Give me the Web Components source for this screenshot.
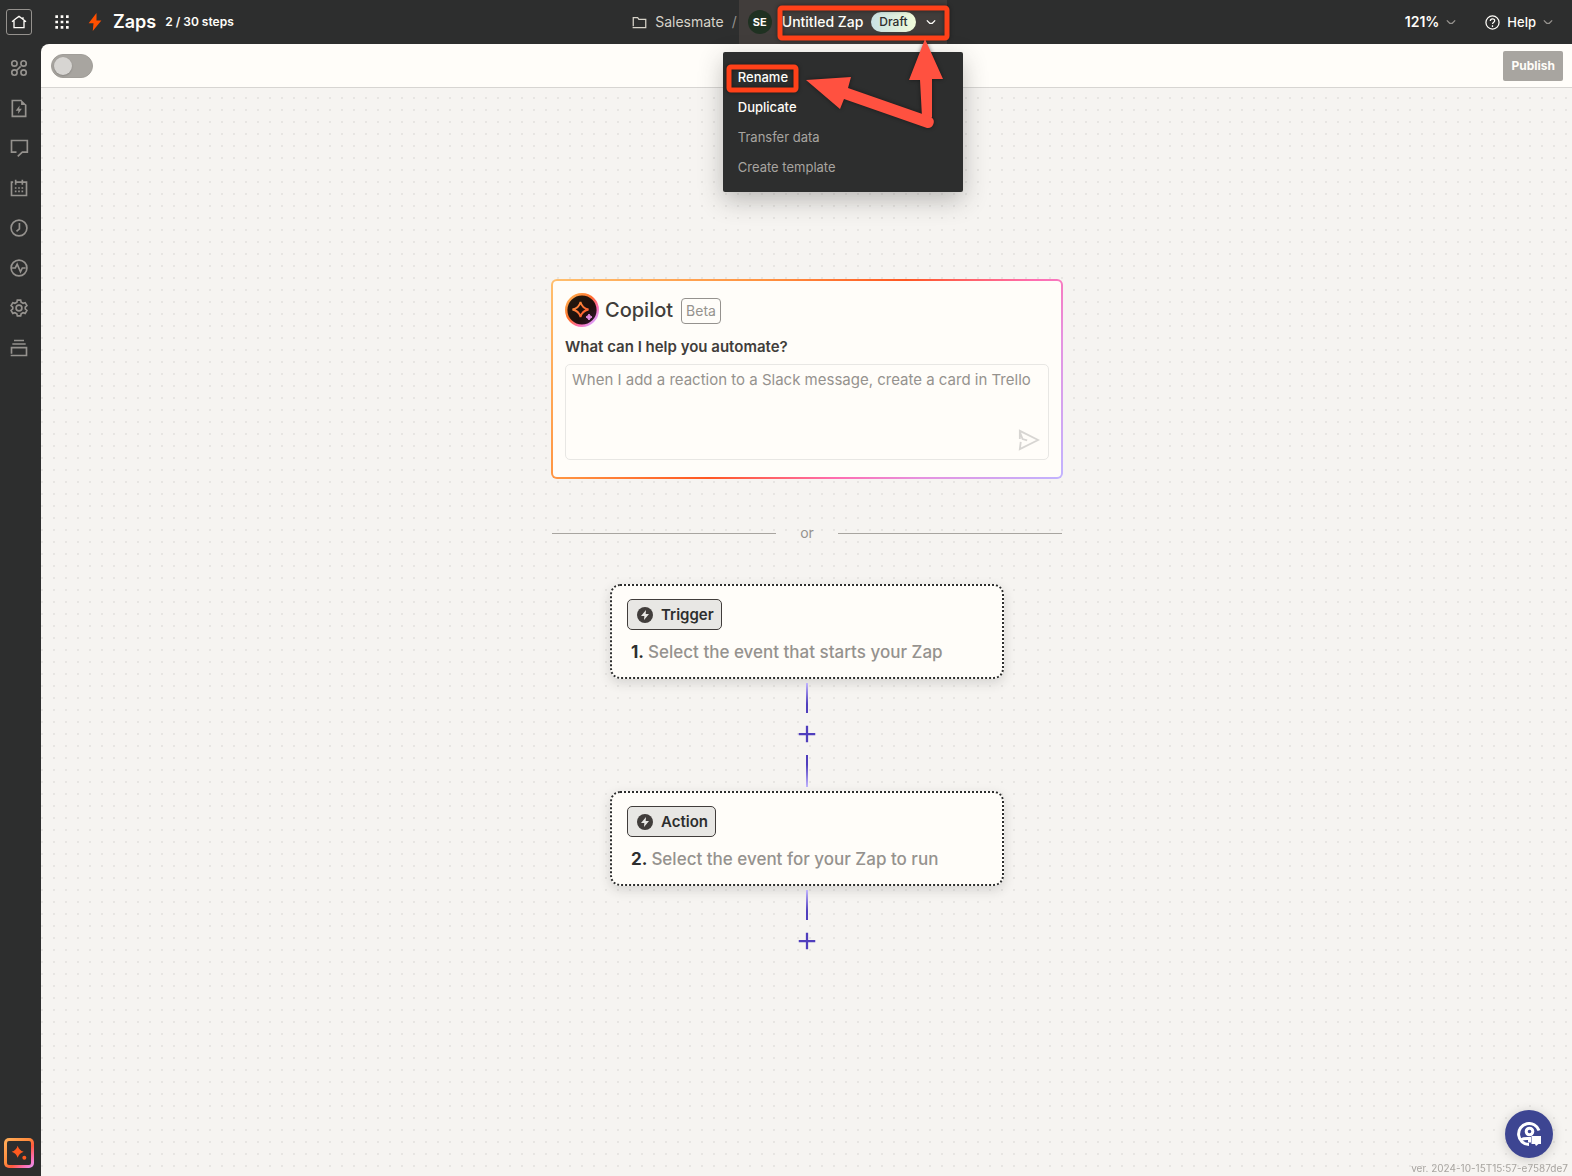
<!DOCTYPE html>
<html lang="en">
<head>
<meta charset="utf-8">
<title>Untitled Zap</title>
<style>
  body {
    margin: 0;
    font-family: Inter, "Liberation Sans", sans-serif;
    font-size: 14px;
    color: #2d2e2e;
    background: #2d2e2e;
  }
</style>
</head>
<body>
<zap-editor></zap-editor>

<script>
/**
 * Icon markup by name, drawn on a 24 x 24 grid.
 */
const icons = {
  home: '<path d="M1.500 11.500 7 7l5-3.500 5 3.500 5.500 4.500M4.500 10v10.500h15V10M18 8V5"/>',
  grid: '<g fill="currentColor" stroke="none"><path d="M2 2h4v4H2zM10 2h4v4h-4zM18 2h4v4h-4zM2 10h4v4H2zM10 10h4v4h-4zM18 10h4v4h-4zM2 18h4v4H2zM10 18h4v4h-4zM18 18h4v4h-4z"/></g>',
  bolt: '<path fill="currentColor" stroke="none" d="M14 0 3.500 13.500h6.500L9 24l11.500-14H14z"/>',
  apps: '<circle cx="6.500" cy="6.500" r="3.200"/><circle cx="17.500" cy="6.500" r="3.200"/><circle cx="6.500" cy="17.500" r="3.200"/><circle cx="17.500" cy="17.500" r="3.200"/><path d="m9 15 5-5"/>',
  file: '<path d="M15 3H4v19h16V8"/><path fill="currentColor" stroke="none" d="M14.500 2 21 8.500h-6.500zM12.800 9 8 15.300h3.300l-.6 4 4.800-6.300h-3.300z"/>',
  comment: '<path d="M9 17H3V3h19v14h-6l-5.500 5"/>',
  calendar: '<path d="M5 5H3v16h18V5H7M8 2v6M16 2v6"/><g fill="currentColor" stroke="none"><path d="M7 11h2v2H7zM11 11h2v2h-2zM15 11h2v2h-2zM7 15h2v2H7zM11 15h2v2h-2zM15 15h2v2h-2z"/></g>',
  clock: '<circle cx="12" cy="12" r="9.500"/><path d="M12.500 6v7L9 16"/>',
  pulse: '<circle cx="12" cy="12" r="9.500"/><path d="M3 12h4.500l2.300-4.500 4 9L16 12h4"/>',
  gear: '<path d="M9.500 5 10 2.500h4l.6 2.600 2.300 1.300 2.500-.8 2.100 3.600-2 1.800v2.200l2 1.800-2.100 3.500-2.600-.8-2.200 1.300-.6 2.500h-4L9.400 19l-2.300-1.300-2.500.8L2.500 15l2-1.800V11l-2-1.800 2.100-3.600 2.500.8z"/><circle cx="12" cy="12" r="3.500"/>',
  stack: '<path d="M6 3h12M4 7.200h16M3 19v-7.500h18V21H2"/>',
  folder: '<path d="M2 18V4h7l2 3h11v13H1"/>',
  chevron: '<path d="m2 8 7 7h6l7-7"/>',
  help: '<circle cx="12" cy="12" r="10.500"/><path d="M8.500 9.500C8.500 5 15.500 5 15.500 9c0 2.500-3.500 2.500-3.500 5.500M12 16.500V19"/>',
  send: '<path d="M2 11 2 2l20 10L2 22l1-8M2 3.500 5 11l5 1.500"/>',
  plus: '<path d="M12 1v22M1 12h22"/>',
  badge: '<circle cx="12" cy="12" r="12" fill="currentColor" stroke="none"/><path fill="#e8e7e4" stroke="none" d="M13.500 4.500 6 13.500h5l-.5 6 7.500-9h-5z"/>',
  sparkle: '<path fill="currentColor" stroke="none" d="M10 1q2 7 9 9-7 2-9 9-2-7-9-9 7-2 9-9z"/><circle cx="20" cy="19" r="3" fill="currentColor" stroke="none"/>',
  support: '<path d="M22 8.500A10.500 10.500 0 1 0 12 22.500"/><circle cx="12.500" cy="9.500" r="3.300"/><path d="M4.500 17.500c1.500-1 4-1.200 8-1v4"/><path fill="currentColor" stroke="none" d="M14.500 14H24v8h-2.500L19 24l-1-2h-3.500z"/>'
}

/**
 * Builds a template element from a markup string.
 *
 * @param {string} markup - The styles and markup of the component.
 * @returns {HTMLTemplateElement} The template.
 */
function createTemplate (markup) {
  const template = document.createElement('template')
  template.innerHTML = markup
  return template
}

/**
 * Base class that clones the static template of a subclass into its shadow root.
 */
class TemplateElement extends HTMLElement {
  constructor () {
    super()
    this.attachShadow({ mode: 'open' })
    this.shadowRoot.appendChild(this.constructor.template.content.cloneNode(true))
  }
}

/**
 * Icon, picked by its name attribute and sized with --size.
 */
class ZapIcon extends TemplateElement {
  static template = createTemplate(`
    <style>
      :host {
        display: inline-flex;
        flex: none;
        width: var(--size, 20px);
        height: var(--size, 20px);
      }
      svg {
        width: 100%;
        height: 100%;
        fill: none;
        stroke: currentColor;
        stroke-width: var(--stroke, 2);
      }
    </style>
    <svg viewBox="0 0 24 24" aria-hidden="true"></svg>
  `)

  connectedCallback () {
    this.shadowRoot.querySelector('svg').innerHTML = icons[this.getAttribute('name')]
  }
}
customElements.define('zap-icon', ZapIcon)

/**
 * Dark column of navigation links at the left.
 */
class ZapSidebar extends TemplateElement {
  static template = createTemplate(`
    <style>
      :host {
        display: flex;
        flex-direction: column;
        justify-content: space-between;
        width: 41px;
        flex: none;
        color: #95928e;
      }
      nav {
        display: flex;
        flex-direction: column;
        padding-top: 4px;
      }
      a {
        display: flex;
        align-items: center;
        justify-content: center;
        width: 38px;
        height: 40px;
        color: inherit;
      }
      button {
        display: flex;
        align-items: center;
        justify-content: center;
        width: 30px;
        height: 30px;
        margin: 0 0 8px 4px;
        padding: 0;
        border: 3px solid transparent;
        border-radius: 5px;
        color: #ff5a1f;
        background:
          linear-gradient(#2d2e2e, #2d2e2e) padding-box,
          linear-gradient(135deg, #ffb05c, #ff8a3c 45%, #ff5a3c 60%, #ff6db0 80%, #e59bff) border-box;
        --size: 16px;
      }
    </style>
    <nav aria-label="Editor">
      <a href="#apps" aria-label="Apps"><zap-icon name="apps"></zap-icon></a>
      <a href="#details" aria-label="Zap details"><zap-icon name="file"></zap-icon></a>
      <a href="#notes" aria-label="Notes"><zap-icon name="comment"></zap-icon></a>
      <a href="#calendar" aria-label="Calendar"><zap-icon name="calendar"></zap-icon></a>
      <a href="#history" aria-label="History"><zap-icon name="clock"></zap-icon></a>
      <a href="#runs" aria-label="Zap runs"><zap-icon name="pulse"></zap-icon></a>
      <a href="#settings" aria-label="Settings"><zap-icon name="gear"></zap-icon></a>
      <a href="#versions" aria-label="Versions"><zap-icon name="stack"></zap-icon></a>
    </nav>
    <button aria-label="Copilot"><zap-icon name="sparkle"></zap-icon></button>
  `)
}
customElements.define('zap-sidebar', ZapSidebar)

/**
 * Red highlight boxes and arrows that point at the zap name and at Rename.
 */
class HelpPointer extends TemplateElement {
  static template = createTemplate(`
    <style>
      :host {
        position: absolute;
        top: 0;
        left: -16px;
        z-index: 2;
        pointer-events: none;
      }
      svg {
        display: block;
        filter: drop-shadow(0 0 2px rgba(0, 0, 0, .45));
      }
    </style>
    <svg width="240" height="140" viewBox="723 0 240 140" aria-hidden="true">
      <g fill="none" stroke="#ff4119" stroke-width="5">
        <rect x="780" y="8" width="167" height="30" rx="2"/>
        <rect x="729" y="67" width="67" height="23" rx="2"/>
      </g>
      <g fill="#ff5140">
        <path d="M925 39 943 79 932 79 932 117 A6 6 0 0 1 922 117 L920 80 909 80z"/>
        <path d="M806 80 851 77 848 88 931 117 A6 6 0 0 1 927 128 L844 99 840 109z"/>
      </g>
    </svg>
  `)
}
customElements.define('help-pointer', HelpPointer)

/**
 * Name of the current zap with its open menu.
 */
class ZapMenu extends TemplateElement {
  static template = createTemplate(`
    <style>
      :host {
        display: flex;
        position: relative;
        color: #fffdf9;
      }
      .current {
        display: flex;
        align-items: center;
        width: 208px;
        height: 44px;
        padding: 0 9px;
        border: 0;
        font: 500 14px/20px Inter, sans-serif;
        white-space: nowrap;
        color: inherit;
        background: #413d3b;
        --size: 10px;
        --stroke: 3;
      }
      .avatar {
        width: 24px;
        height: 24px;
        margin-right: 10px;
        border-radius: 50%;
        font: 700 11px/24px Inter, sans-serif;
        text-align: center;
        background: #1f3121;
      }
      .draft {
        margin: 0 10px 0 8px;
        padding: 0 8px;
        border-radius: 10px;
        font: 500 12px/20px Inter, sans-serif;
        color: #2d2e2e;
        background: linear-gradient(90deg, #c8e1e4, #f1fbd9);
      }
      .list {
        position: absolute;
        top: 52px;
        left: -16px;
        z-index: 1;
        box-sizing: border-box;
        width: 240px;
        padding: 10px 0;
        border-radius: 2px;
        background: #2d2e2e;
        box-shadow: 0 8px 24px rgba(45, 46, 46, .3);
      }
      .list button {
        display: block;
        width: 100%;
        height: 30px;
        padding: 0 15px;
        border: 0;
        font: 500 13px/30px Inter, sans-serif;
        text-align: left;
        color: inherit;
        background: none;
      }
      .list button:disabled {
        font-weight: 400;
        color: #a8a5a0;
      }
    </style>
    <button class="current" aria-expanded="true">
      <span class="avatar">SE</span>
      <span>Untitled Zap</span>
      <span class="draft">Draft</span>
      <zap-icon name="chevron"></zap-icon>
    </button>
    <div class="list">
      <button>Rename</button>
      <button>Duplicate</button>
      <button disabled>Transfer data</button>
      <button disabled>Create template</button>
    </div>
    <help-pointer></help-pointer>
  `)
}
customElements.define('zap-menu', ZapMenu)

/**
 * Top bar with the product name, the breadcrumb and the zoom and help menus.
 */
class ZapHeader extends TemplateElement {
  static template = createTemplate(`
    <style>
      :host {
        display: grid;
        grid-template-columns: 1fr auto 1fr;
        height: 44px;
        line-height: 20px;
        color: #fffdf9;
        background: #2d2e2e;
      }
      .left, .path, .right {
        display: flex;
        align-items: center;
      }
      a {
        display: flex;
        align-items: center;
        color: inherit;
        text-decoration: none;
      }
      button {
        display: flex;
        align-items: center;
        gap: 7px;
        padding: 0;
        border: 0;
        font: 500 13px/20px Inter, sans-serif;
        color: inherit;
        background: none;
      }
      .left {
        padding-left: 6px;
      }
      .home {
        justify-content: center;
        box-sizing: border-box;
        width: 26px;
        height: 26px;
        border: 1px solid #95928e;
        border-radius: 3px;
        --size: 16px;
      }
      .grid {
        margin: 0 16px 0 22px;
        --size: 16px;
      }
      .bolt {
        color: #ff4f00;
        --size: 18px;
      }
      h1 {
        margin: 0 9px;
        font-size: 18px;
        line-height: 24px;
        font-weight: 600;
      }
      .steps {
        font-size: 12px;
        font-weight: 600;
      }
      .path {
        padding-left: 7px;
        color: #d7d3c9;
      }
      .path a {
        gap: 8px;
        --size: 15px;
      }
      .slash {
        margin: 0 2px 0 8px;
        color: #95928e;
      }
      .right {
        justify-content: flex-end;
        gap: 29px;
        padding-right: 19px;
      }
      .right .zoom {
        font-size: 14px;
        font-weight: 600;
      }
      .chevron {
        color: #95928e;
        --size: 10px;
        --stroke: 3;
      }
      .help {
        --size: 15px;
      }
    </style>
    <div class="left">
      <a class="home" href="#home" aria-label="Home"><zap-icon name="home"></zap-icon></a>
      <button class="grid" aria-label="Products"><zap-icon name="grid"></zap-icon></button>
      <zap-icon class="bolt" name="bolt"></zap-icon>
      <h1>Zaps</h1>
      <span class="steps">2 / 30 steps</span>
    </div>
    <div class="path">
      <a href="#folder"><zap-icon name="folder"></zap-icon>Salesmate</a>
      <span class="slash">/</span>
      <zap-menu></zap-menu>
    </div>
    <div class="right">
      <button class="zoom">121%<zap-icon class="chevron" name="chevron"></zap-icon></button>
      <button><zap-icon class="help" name="help"></zap-icon>Help<zap-icon class="chevron" name="chevron"></zap-icon></button>
    </div>
  `)
}
customElements.define('zap-header', ZapHeader)

/**
 * Light bar with the on/off switch and the publish button.
 */
class ZapToolbar extends TemplateElement {
  static template = createTemplate(`
    <style>
      :host {
        display: flex;
        align-items: center;
        justify-content: space-between;
        height: 43px;
        padding: 0 9px 0 10px;
        border-bottom: 1px solid #d7d5d2;
        border-top-left-radius: 8px;
        background: #fffdf9;
      }
      input {
        appearance: none;
        display: flex;
        align-items: center;
        box-sizing: border-box;
        width: 42px;
        height: 24px;
        margin: 0;
        padding: 0 2px;
        border: 1px solid #a19e99;
        border-radius: 12px;
        background: #a8a5a0;
      }
      input::before {
        content: "";
        width: 18px;
        height: 18px;
        border-radius: 50%;
        background: #d7d5d2;
        box-shadow: 0 1px 2px rgba(0, 0, 0, .2);
      }
      button {
        height: 30px;
        padding: 0 8px;
        border: 0;
        border-radius: 2px;
        font: 700 12px/30px Inter, sans-serif;
        color: #fffdf9;
        background: #a8a5a0;
      }
    </style>
    <input type="checkbox" role="switch" aria-label="Zap is on">
    <button disabled>Publish</button>
  `)
}
customElements.define('zap-toolbar', ZapToolbar)

/**
 * Prompt card of the copilot.
 */
class CopilotCard extends TemplateElement {
  static template = createTemplate(`
    <style>
      :host {
        display: block;
        box-sizing: border-box;
        width: 512px;
        max-width: 100%;
        padding: 12px 12px 17px;
        border: 2px solid transparent;
        border-radius: 6px;
        background:
          linear-gradient(#fffdf9, #fffdf9) padding-box,
          linear-gradient(135deg, #ffbf6e, #ff9240 30%, #ff5722 50%, #ff6db0 68%, #e692e0 80%, #c1b4ff) border-box;
      }
      header {
        display: flex;
        align-items: center;
      }
      .logo {
        flex: none;
        width: 34px;
        height: 34px;
      }
      h2 {
        margin: 0 8px 0 6px;
        font-size: 20px;
        line-height: 24px;
        font-weight: 500;
        color: #413d3b;
      }
      .beta {
        margin-top: 1px;
        padding: 0 4px;
        border: 1px solid #95928e;
        border-radius: 4px;
        line-height: 24px;
        color: #95928e;
      }
      label {
        display: block;
        padding: 9px 0 6px;
        font-size: 15px;
        line-height: 22px;
        font-weight: 600;
        color: #413d3b;
      }
      .field {
        position: relative;
        box-sizing: border-box;
        height: 96px;
        border: 1px solid #e8e7e4;
        border-radius: 5px;
      }
      textarea {
        display: block;
        box-sizing: border-box;
        width: 100%;
        height: 100%;
        padding: 4px 6px;
        border: 0;
        outline: 0;
        resize: none;
        font: 400 15px/22px Inter, sans-serif;
        color: #2d2e2e;
        background: none;
      }
      textarea::placeholder {
        color: #95928e;
      }
      button {
        position: absolute;
        right: 8px;
        bottom: 8px;
        padding: 0;
        border: 0;
        line-height: 0;
        color: #d7d5d2;
        background: none;
        --size: 22px;
      }
    </style>
    <header>
      <svg class="logo" viewBox="0 0 34 34" aria-hidden="true">
        <defs>
          <linearGradient id="ring" x1="0" y1="0" x2="1" y2="1">
            <stop offset=".1" stop-color="#ffa94d"/>
            <stop offset=".45" stop-color="#ff6a2b"/>
            <stop offset=".7" stop-color="#ff6db0"/>
            <stop offset=".9" stop-color="#d8a4ff"/>
          </linearGradient>
          <linearGradient id="fill" x1="0" y1="0" x2="1" y2="1">
            <stop offset="0" stop-color="#241c10"/>
            <stop offset=".6" stop-color="#200f0c"/>
            <stop offset="1" stop-color="#3a1838"/>
          </linearGradient>
          <linearGradient id="star" x1="0" y1="0" x2="1" y2="1">
            <stop offset="0" stop-color="#ff9a40"/>
            <stop offset="1" stop-color="#ff4f2b"/>
          </linearGradient>
        </defs>
        <circle cx="17" cy="17" r="15.800" fill="url(#fill)" stroke="url(#ring)" stroke-width="2.400"/>
        <path d="M15.500 9q1.500 6 8 7.500-6.500 1.500-8 7.500-1.500-6-8-7.500 6.500-1.500 8-7.500z" fill="none" stroke="url(#star)" stroke-width="1.800"/>
        <path d="M24 21q.8 2.400 3 3-2.200.8-3 3-.8-2.200-3-3 2.200-.6 3-3z" fill="#e48be0" stroke="#e48be0"/>
      </svg>
      <h2>Copilot</h2>
      <span class="beta">Beta</span>
    </header>
    <label for="prompt">What can I help you automate?</label>
    <div class="field">
      <textarea id="prompt" placeholder="When I add a reaction to a Slack message, create a card in Trello"></textarea>
      <button aria-label="Send"><zap-icon name="send"></zap-icon></button>
    </div>
  `)
}
customElements.define('copilot-card', CopilotCard)

/**
 * Line with a word in its middle.
 */
class TextDivider extends TemplateElement {
  static template = createTemplate(`
    <style>
      :host {
        display: flex;
        align-items: center;
        gap: 24px;
        width: 510px;
        max-width: 100%;
        line-height: 20px;
        color: #95928e;
      }
      :host::before, :host::after {
        content: "";
        flex: 1;
        height: 1px;
        background: #a8a5a0;
      }
    </style>
    <slot></slot>
  `)
}
customElements.define('text-divider', TextDivider)

/**
 * Dotted card of one step. Takes the kind and number attributes, and its title as content.
 */
class ZapStep extends TemplateElement {
  static template = createTemplate(`
    <style>
      :host {
        display: block;
        box-sizing: border-box;
        width: 394px;
        max-width: 100%;
        height: 95px;
        padding: 13px 15px;
        border: 2px dotted #2d2e2e;
        border-radius: 10px;
        background: #fffdf9;
        box-shadow: 0 4px 12px rgba(45, 46, 46, .16);
      }
      .kind {
        display: inline-flex;
        align-items: center;
        gap: 8px;
        box-sizing: border-box;
        height: 31px;
        padding: 0 7px 0 9px;
        border: 1px solid #413d3b;
        border-radius: 5px;
        font: 600 15px/29px Inter, sans-serif;
        color: #2d2e2e;
        background: #e8e7e4;
        --size: 16px;
      }
      .kind zap-icon {
        color: #413d3b;
      }
      p {
        display: flex;
        gap: 4px;
        margin: 10px 0 0;
        padding-left: 4px;
        font-size: 17px;
        line-height: 24px;
        font-weight: 500;
        color: #95928e;
      }
      b {
        font-weight: 700;
        color: #2d2e2e;
      }
    </style>
    <button class="kind"><zap-icon name="badge"></zap-icon><span id="kind"></span></button>
    <p><b></b><slot></slot></p>
  `)

  connectedCallback () {
    this.shadowRoot.querySelector('#kind').textContent = this.getAttribute('kind')
    this.shadowRoot.querySelector('b').textContent = `${this.getAttribute('number')}.`
  }
}
customElements.define('zap-step', ZapStep)

/**
 * Connector below a step, with the button that adds a step. The last one has no lower line.
 */
class StepConnector extends TemplateElement {
  static template = createTemplate(`
    <style>
      :host {
        display: flex;
        flex-direction: column;
        align-items: center;
        gap: 12px;
        padding: 4px 0;
      }
      .line {
        width: 2px;
        height: 30px;
        background: linear-gradient(#c1b4ff, #503ebd 70%);
      }
      .lower {
        height: 32px;
        background: linear-gradient(#503ebd 30%, #c1b4ff);
      }
      :host([last]) .lower {
        display: none;
      }
      button {
        padding: 0;
        border: 0;
        line-height: 0;
        color: #503ebd;
        background: none;
        --size: 18px;
        --stroke: 3;
      }
    </style>
    <div class="line"></div>
    <button aria-label="Add step"><zap-icon name="plus"></zap-icon></button>
    <div class="line lower"></div>
  `)
}
customElements.define('step-connector', StepConnector)

/**
 * Round support button with the version text below it.
 */
class SupportCorner extends TemplateElement {
  static template = createTemplate(`
    <style>
      :host {
        position: fixed;
        right: 4px;
        bottom: 0;
        display: flex;
        flex-direction: column;
        align-items: flex-end;
        font-size: 10px;
        line-height: 16px;
        color: #a8a5a0;
      }
      button {
        display: flex;
        align-items: center;
        justify-content: center;
        width: 48px;
        height: 48px;
        margin: 0 15px 2px 0;
        padding: 0;
        border: 0;
        border-radius: 50%;
        color: #fff;
        background: #3d4592;
        box-shadow: 0 2px 12px rgba(0, 0, 0, .18);
        --size: 24px;
        --stroke: 3;
      }
    </style>
    <button aria-label="Support"><zap-icon name="support"></zap-icon></button>
    <span><slot></slot></span>
  `)
}
customElements.define('support-corner', SupportCorner)

/**
 * The whole editor: header, sidebar, toolbar and the dotted canvas.
 */
class ZapEditor extends TemplateElement {
  static template = createTemplate(`
    <style>
      :host {
        display: flex;
        flex-direction: column;
        min-height: 100vh;
      }
      .body {
        display: flex;
        flex: 1;
      }
      .content {
        display: flex;
        flex-direction: column;
        flex: 1;
        min-width: 0;
      }
      main {
        display: flex;
        flex-direction: column;
        align-items: center;
        flex: 1;
        padding: 191px 0 40px 1px;
        background: #f6f4f1 radial-gradient(circle at 1px 10px, #dedcd9 0, #ebe9e6 1px, transparent 1px) 0 0 / 12px 12px;
      }
      text-divider {
        margin: 44px 0 41px;
      }
    </style>
    <zap-header></zap-header>
    <div class="body">
      <zap-sidebar></zap-sidebar>
      <div class="content">
        <zap-toolbar></zap-toolbar>
        <main>
          <copilot-card></copilot-card>
          <text-divider>or</text-divider>
          <zap-step kind="Trigger" number="1">Select the event that starts your Zap</zap-step>
          <step-connector></step-connector>
          <zap-step kind="Action" number="2">Select the event for your Zap to run</zap-step>
          <step-connector last></step-connector>
        </main>
      </div>
    </div>
    <support-corner>ver. 2024-10-15T15:57-e7587de7</support-corner>
  `)
}
customElements.define('zap-editor', ZapEditor)
</script>
</body>
</html>
